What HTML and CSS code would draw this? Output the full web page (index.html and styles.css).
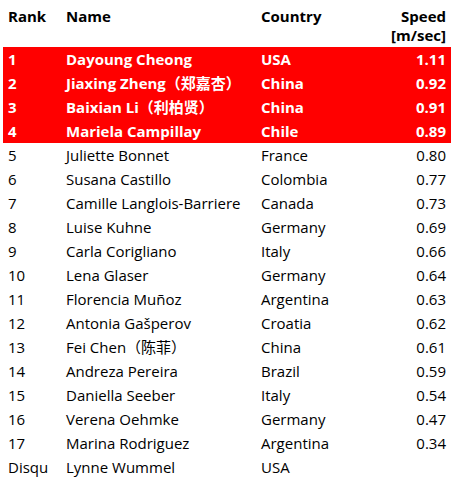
FILE: index.html
```html
<!DOCTYPE html>
<html>
<head>
<meta charset="utf-8">
<link rel="stylesheet" href="styles.css">
</head>
<body>
<table class="results">
  <thead>
    <tr>
      <th class="c-rank">Rank</th>
      <th class="c-name">Name</th>
      <th class="c-country">Country</th>
      <th class="c-speed">Speed<br>[m/sec]</th>
    </tr>
  </thead>
  <tbody>
    <tr class="top"><td>1</td><td>Dayoung Cheong</td><td>USA</td><td class="num">1.11</td></tr>
    <tr class="top"><td>2</td><td>Jiaxing Zheng（郑嘉杏）</td><td>China</td><td class="num">0.92</td></tr>
    <tr class="top"><td>3</td><td>Baixian Li（利柏贤）</td><td>China</td><td class="num">0.91</td></tr>
    <tr class="top"><td>4</td><td>Mariela Campillay</td><td>Chile</td><td class="num">0.89</td></tr>
    <tr><td>5</td><td>Juliette Bonnet</td><td>France</td><td class="num">0.80</td></tr>
    <tr><td>6</td><td>Susana Castillo</td><td>Colombia</td><td class="num">0.77</td></tr>
    <tr><td>7</td><td>Camille Langlois-Barriere</td><td>Canada</td><td class="num">0.73</td></tr>
    <tr><td>8</td><td>Luise Kuhne</td><td>Germany</td><td class="num">0.69</td></tr>
    <tr><td>9</td><td>Carla Corigliano</td><td>Italy</td><td class="num">0.66</td></tr>
    <tr><td>10</td><td>Lena Glaser</td><td>Germany</td><td class="num">0.64</td></tr>
    <tr><td>11</td><td>Florencia Muñoz</td><td>Argentina</td><td class="num">0.63</td></tr>
    <tr><td>12</td><td>Antonia Gašperov</td><td>Croatia</td><td class="num">0.62</td></tr>
    <tr><td>13</td><td>Fei Chen（陈菲）</td><td>China</td><td class="num">0.61</td></tr>
    <tr><td>14</td><td>Andreza Pereira</td><td>Brazil</td><td class="num">0.59</td></tr>
    <tr><td>15</td><td>Daniella Seeber</td><td>Italy</td><td class="num">0.54</td></tr>
    <tr><td>16</td><td>Verena Oehmke</td><td>Germany</td><td class="num">0.47</td></tr>
    <tr><td>17</td><td>Marina Rodriguez</td><td>Argentina</td><td class="num">0.34</td></tr>
    <tr><td>Disqu</td><td>Lynne Wummel</td><td>USA</td><td class="num"></td></tr>
  </tbody>
</table>
</body>
</html>
```
FILE: styles.css
```css
html, body {
  margin: 0;
  padding: 0;
  background: #fff;
}
body {
  font-family: "Open Sans", "Noto Sans CJK SC", sans-serif;
  font-size: 15px;
  color: #000;
}
.results {
  border-collapse: collapse;
  margin: 3px;
  width: 448px;
  table-layout: fixed;
}
.results th {
  font-weight: bold;
  text-align: left;
  vertical-align: top;
  line-height: 19px;
  padding: 4px 5px 2px;
}
.results th.c-speed {
  text-align: right;
}
.results td {
  height: 24px;
  line-height: 24px;
  padding: 0 5px;
  white-space: nowrap;
  overflow: visible;
}
.c-rank { width: 48px; }
.c-name { width: 185px; }
.c-country { width: 100px; }
.results td.num {
  text-align: right;
}
.results tr.top {
  background: #ff0000;
  color: #fff;
  font-weight: bold;
}
```
